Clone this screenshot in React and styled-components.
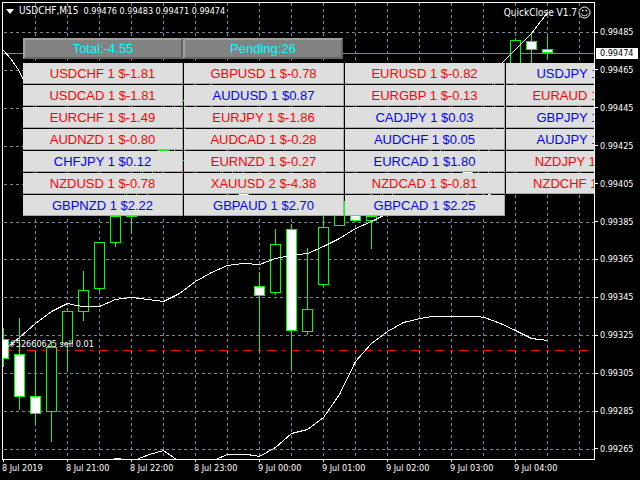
import React from "react";
import styled, { createGlobalStyle } from "styled-components";

const GlobalStyle = createGlobalStyle`
    * {
        box-sizing: border-box;
    }
    body {
        margin: 0;
        background: #000;
        color: #fff;
        font-family: "DejaVu Sans Condensed", "DejaVu Sans", sans-serif;
        font-stretch: condensed;
        font-size: 9px;
        line-height: 12px;
    }
`;

const prices = [
    "0.99485",
    "0.99465",
    "0.99445",
    "0.99425",
    "0.99405",
    "0.99385",
    "0.99365",
    "0.99345",
    "0.99325",
    "0.99305",
    "0.99285",
    "0.99265",
];

const times = [
    "8 Jul 2019",
    "8 Jul 21:00",
    "8 Jul 22:00",
    "8 Jul 23:00",
    "9 Jul 00:00",
    "9 Jul 01:00",
    "9 Jul 02:00",
    "9 Jul 03:00",
    "9 Jul 04:00",
];

const positions = [
    ["USDCHF 1", "-1.81"],
    ["GBPUSD 1", "-0.78"],
    ["EURUSD 1", "-0.82"],
    ["USDJPY 1", "0.64"],
    ["USDCAD 1", "-1.81"],
    ["AUDUSD 1", "0.87"],
    ["EURGBP 1", "-0.13"],
    ["EURAUD 1", "-0.92"],
    ["EURCHF 1", "-1.49"],
    ["EURJPY 1", "-1.86"],
    ["CADJPY 1", "0.03"],
    ["GBPJPY 1", "0.75"],
    ["AUDNZD 1", "-0.80"],
    ["AUDCAD 1", "-0.28"],
    ["AUDCHF 1", "0.05"],
    ["AUDJPY 1", "0.31"],
    ["CHFJPY 1", "0.12"],
    ["EURNZD 1", "-0.27"],
    ["EURCAD 1", "1.80"],
    ["NZDJPY 1", "-0.46"],
    ["NZDUSD 1", "-0.78"],
    ["XAUUSD 2", "-4.38"],
    ["NZDCAD 1", "-0.81"],
    ["NZDCHF 1", "-0.55"],
    ["GBPNZD 1", "2.22"],
    ["GBPAUD 1", "2.70"],
    ["GBPCAD 1", "2.25"],
];

// x, high, body top, body bottom, low, bearish
const candles = [
    [3, 328, 339, 358, 366, true],
    [19, 318, 354, 396, 409, true],
    [35, 351, 396, 413, 423, true],
    [51, 341, 347, 411, 441, false],
    [67, 308, 311, 343, 371, false],
    [83, 271, 290, 311, 320, false],
    [99, 242, 242, 288, 290, false],
    [115, 216, 216, 242, 246, false],
    [131, 180, 186, 216, 233, false],
    [147, 160, 165, 186, 196, false],
    [163, 140, 150, 165, 175, true],
    [179, 95, 100, 160, 165, false],
    [195, 75, 90, 98, 110, false],
    [211, 78, 86, 95, 110, true],
    [227, 150, 160, 185, 198, false],
    [243, 160, 180, 200, 205, true],
    [259, 272, 286, 295, 350, true],
    [275, 229, 244, 292, 294, false],
    [291, 224, 229, 330, 369, true],
    [307, 248, 309, 331, 334, false],
    [323, 205, 227, 284, 286, false],
    [339, 198, 201, 225, 225, false],
    [355, 198, 206, 220, 221, true],
    [371, 190, 216, 220, 248, false],
    [387, 180, 188, 212, 216, false],
    [435, 140, 148, 155, 160, false],
    [467, 165, 170, 176, 196, true],
    [483, 140, 146, 180, 196, false],
    [499, 75, 80, 140, 145, false],
    [515, 38, 40, 75, 90, false],
    [531, 32, 41, 49, 75, true],
    [547, 36, 49, 52, 58, true],
];

const bands = [
    "3,50 10,58 15,65 19,71 23,80",
    "501,63 515,49 531,33 547,12",
    "3,350 9,345 19,337 35,323 51,311 67,303 76,305 83,306 99,306 115,299 131,297 147,299 163,301 179,293 195,281 211,272 227,265 243,263 259,264 275,258 291,255 307,253 323,246 339,238 355,228 371,221 387,213 435,202 491,194",
    "113,458 120,458",
    "136,459 149,454 163,450 176,459",
    "215,459 227,454 247,454 259,456 275,447 291,433 307,429 323,417 339,394 355,361 371,343 387,331 403,322 420,318 431,316 476,316 484,317 500,323 515,330 531,338 547,340",
];

const gridX = Array.from({ length: 18 }, (_, i) => 35 + i * 32);
const gridY = [32, 70, 108, 146, 184, 222, 259, 297, 335, 373, 411, 449];

const Chart = () => (
    <ChartSvg viewBox='3 3 591 456' preserveAspectRatio='none'>
        <g stroke='#778899' strokeDasharray='3 3' shapeRendering='crispEdges'>
            {gridX.map((x) => (
                <path key={x} d={`M${x + 0.5} 3V459`} />
            ))}
            {gridY.map((y) => (
                <path key={y} d={`M4 ${y + 0.5}H594`} />
            ))}
        </g>
        <path d='M3 53.5H594' stroke='#778899' shapeRendering='crispEdges' />
        <path
            d='M3 350.5H588'
            stroke='#f00'
            strokeDasharray='9 6 3 6'
            shapeRendering='crispEdges'
        />
        <g stroke='#0f0' shapeRendering='crispEdges'>
            {candles.map(([x, high, top, bottom, low, bearish]) => (
                <g key={x}>
                    <path
                        d={`M${x + 0.5} ${high}V${top}M${x + 0.5} ${bottom}V${low + 1}`}
                    />
                    <rect
                        x={x - 4.5}
                        y={top + 0.5}
                        width='10'
                        height={bottom - top}
                        fill={bearish ? "#fff" : "#000"}
                    />
                </g>
            ))}
        </g>
        <g
            fill='none'
            stroke='#fff'
            shapeRendering='crispEdges'
            transform='translate(0.5 0.5)'
        >
            {bands.map((points) => (
                <polyline key={points} points={points} />
            ))}
        </g>
    </ChartSvg>
);

const App = () => {
    return (
        <Terminal>
            <GlobalStyle />
            <Plot>
                <TitleBar>
                    <Quote>
                        <svg width='8' height='5' viewBox='0 0 8 5'>
                            <path d='M0 0h8L4 5z' fill='#fff' />
                        </svg>
                        <Symbol>USDCHF,M15</Symbol>
                        <span>0.99476 0.99483 0.99471 0.99474</span>
                    </Quote>
                    <Expert>
                        QuickClose V1.7
                        <svg
                            width='13'
                            height='13'
                            viewBox='0 0 13 13'
                            fill='none'
                            stroke='#fff'
                        >
                            <circle cx='6.5' cy='6.5' r='5.5' />
                            <path d='M3.2 7.5c1 3 5.6 3 6.6 0' />
                            <path d='M4 4.5h1.5M7.5 4.5H9' strokeWidth='1.5' />
                        </svg>
                    </Expert>
                </TitleBar>
                <Chart />
                <OrderLabel>#52660625 sell 0.01</OrderLabel>
                <Panel>
                    <Summary>
                        <SummaryButton>Total:-4.55</SummaryButton>
                        <SummaryButton>Pending:26</SummaryButton>
                    </Summary>
                    <Positions>
                        {positions.map(([name, profit]) => (
                            <PositionButton
                                key={name}
                                $loss={profit.startsWith("-")}
                            >
                                {name} ${profit}
                            </PositionButton>
                        ))}
                    </Positions>
                </Panel>
            </Plot>
            <PriceAxis>
                {prices.map((price) => (
                    <Price key={price}>{price}</Price>
                ))}
                <CurrentPrice>0.99474</CurrentPrice>
            </PriceAxis>
            <TimeAxis>
                {times.map((time) => (
                    <Time key={time}>{time}</Time>
                ))}
            </TimeAxis>
        </Terminal>
    );
};

const Terminal = styled.main`
    display: grid;
    grid-template-columns: minmax(0, 1fr) 45px;
    grid-template-rows: minmax(0, 1fr) 20px;
    height: 100vh;
    padding: 2px 0 0 2px;
`;

const Plot = styled.section`
    position: relative;
    border: 1px solid #fff;
    overflow: hidden;
`;

const ChartSvg = styled.svg`
    position: absolute;
    inset: 0;
    width: 100%;
    height: 100%;
`;

const TitleBar = styled.header`
    display: flex;
    justify-content: space-between;
    height: 35px;
    padding: 2px 3px 0 3px;
    white-space: nowrap;
`;

const Quote = styled.div`
    display: flex;
    align-items: center;
    gap: 5px;
    height: 12px;
`;

const Symbol = styled.span`
    font-size: 10px;
`;

const Expert = styled.div`
    display: flex;
    align-items: center;
    gap: 1px;
    height: 15px;
    font-size: 10px;
`;

const OrderLabel = styled.span`
    position: absolute;
    left: 6px;
    top: 73.5%;
    white-space: nowrap;
`;

const Panel = styled.div`
    position: relative;
    padding-left: 20px;
`;

const Summary = styled.div`
    display: grid;
    grid-template-columns: repeat(2, 160px);
    margin-bottom: 4px;
`;

const Positions = styled.div`
    display: grid;
    grid-template-columns: repeat(4, 160px);
    gap: 1px;
`;

const PanelButton = styled.button`
    height: 21px;
    padding: 0;
    font-family: "Liberation Sans", Arial, sans-serif;
    font-size: 13px;
    line-height: 15px;
    white-space: nowrap;
`;

const SummaryButton = styled(PanelButton)`
    border: 2px solid;
    border-color: #a0a0a0 #646464 #646464 #a0a0a0;
    background: #828282;
    color: #0ff;
`;

const PositionButton = styled(PanelButton)`
    border: solid #a8a8a8;
    border-width: 0 1px 1px 0;
    background: #dedede;
    color: ${({ $loss }) => ($loss ? "#f00" : "#00f")};
`;

const PriceAxis = styled.aside`
    position: relative;
    display: flex;
    flex-direction: column;
    justify-content: space-between;
    padding: 24px 0 5px;
`;

const Price = styled.span`
    display: flex;
    align-items: center;
    gap: 2px;
    height: 12px;
    &::before {
        content: "";
        width: 3px;
        height: 1px;
        background: #fff;
    }
`;

const CurrentPrice = styled.strong`
    position: absolute;
    left: 1px;
    right: 2px;
    top: 46px;
    padding-left: 4px;
    background: #fff;
    color: #000;
    font-weight: normal;
    line-height: 11px;
`;

const TimeAxis = styled.footer`
    display: grid;
    grid-template-columns: repeat(9, minmax(0, 64fr)) minmax(0, 17fr);
`;

const Time = styled.span`
    position: relative;
    padding-top: 2px;
    white-space: nowrap;
    &::before {
        content: "";
        position: absolute;
        left: 1px;
        top: 0;
        width: 1px;
        height: 2px;
        background: #fff;
    }
`;

export default App;
